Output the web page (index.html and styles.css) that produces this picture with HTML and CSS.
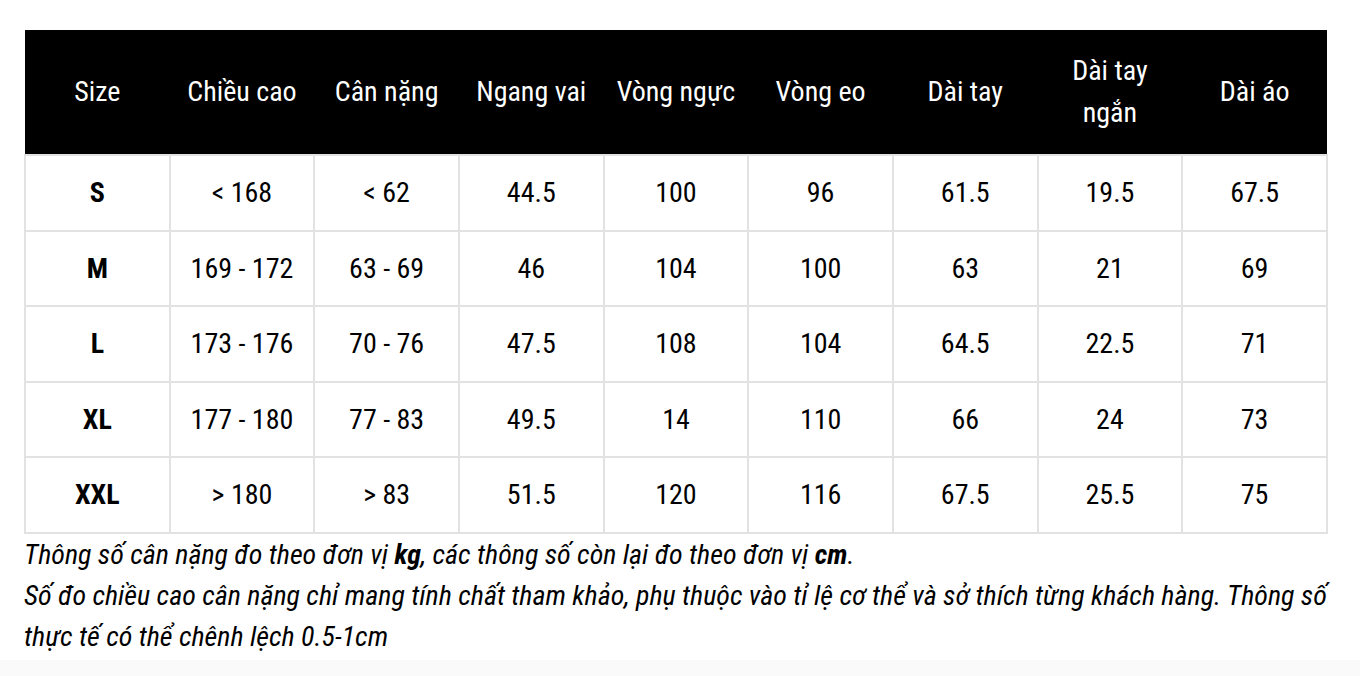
FILE: index.html
```html
<!DOCTYPE html>
<html lang="vi">
<head>
<meta charset="utf-8">
<link rel="stylesheet" href="styles.css">
</head>
<body>
<div class="page">
  <table class="size-table">
    <thead>
      <tr>
        <th>Size</th>
        <th>Chiều cao</th>
        <th>Cân nặng</th>
        <th>Ngang vai</th>
        <th>Vòng ngực</th>
        <th>Vòng eo</th>
        <th>Dài tay</th>
        <th>Dài tay<br>ngắn</th>
        <th>Dài áo</th>
      </tr>
    </thead>
    <tbody>
      <tr><td class="sz">S</td><td>&lt; 168</td><td>&lt; 62</td><td>44.5</td><td>100</td><td>96</td><td>61.5</td><td>19.5</td><td>67.5</td></tr>
      <tr><td class="sz">M</td><td>169 - 172</td><td>63 - 69</td><td>46</td><td>104</td><td>100</td><td>63</td><td>21</td><td>69</td></tr>
      <tr><td class="sz">L</td><td>173 - 176</td><td>70 - 76</td><td>47.5</td><td>108</td><td>104</td><td>64.5</td><td>22.5</td><td>71</td></tr>
      <tr><td class="sz">XL</td><td>177 - 180</td><td>77 - 83</td><td>49.5</td><td>14</td><td>110</td><td>66</td><td>24</td><td>73</td></tr>
      <tr><td class="sz">XXL</td><td>&gt; 180</td><td>&gt; 83</td><td>51.5</td><td>120</td><td>116</td><td>67.5</td><td>25.5</td><td>75</td></tr>
    </tbody>
  </table>
  <div class="notes">
    <p>Thông số cân nặng đo theo đơn vị <b>kg</b>, các thông số còn lại đo theo đơn vị <b>cm</b>.</p>
    <p>Số đo chiều cao cân nặng chỉ mang tính chất tham khảo, phụ thuộc vào tỉ lệ cơ thể và sở thích từng khách hàng. Thông số thực tế có thể chênh lệch 0.5-1cm</p>
  </div>
</div>
<div class="bottom-band"></div>
</body>
</html>
```

FILE: styles.css
```css
html, body {
  margin: 0;
  padding: 0;
  background: #ffffff;
}
body {
  font-family: "Roboto Condensed", "Roboto", sans-serif;
  color: #000;
  height: 676px;
  overflow: hidden;
  display: flex;
  flex-direction: column;
}
.page {
  padding: 30px 20px 0 24px;
  height: 630px;
  box-sizing: border-box;
}
.size-table {
  width: 1304px;
  border-collapse: collapse;
  table-layout: fixed;
}
.size-table th {
  background: #000;
  color: #fff;
  font-weight: 400;
  font-size: 28px;
  line-height: 42px;
  height: 125px;
  padding: 0 4px;
  box-sizing: border-box;
  text-align: center;
  vertical-align: middle;
}
.size-table td {
  border: 2px solid #e2e2e2;
  height: 75.5px;
  padding: 0;
  box-sizing: border-box;
  font-size: 28px;
  text-align: center;
  vertical-align: middle;
}
.size-table td.sz {
  font-weight: 700;
}
.notes {
  font-style: italic;
  font-size: 28px;
  line-height: 41px;
  margin-top: 0;
}
.notes p {
  margin: 0;
}
.bottom-band {
  flex: 1;
  background: #fafafa;
  margin-top: 30px;
}
```
